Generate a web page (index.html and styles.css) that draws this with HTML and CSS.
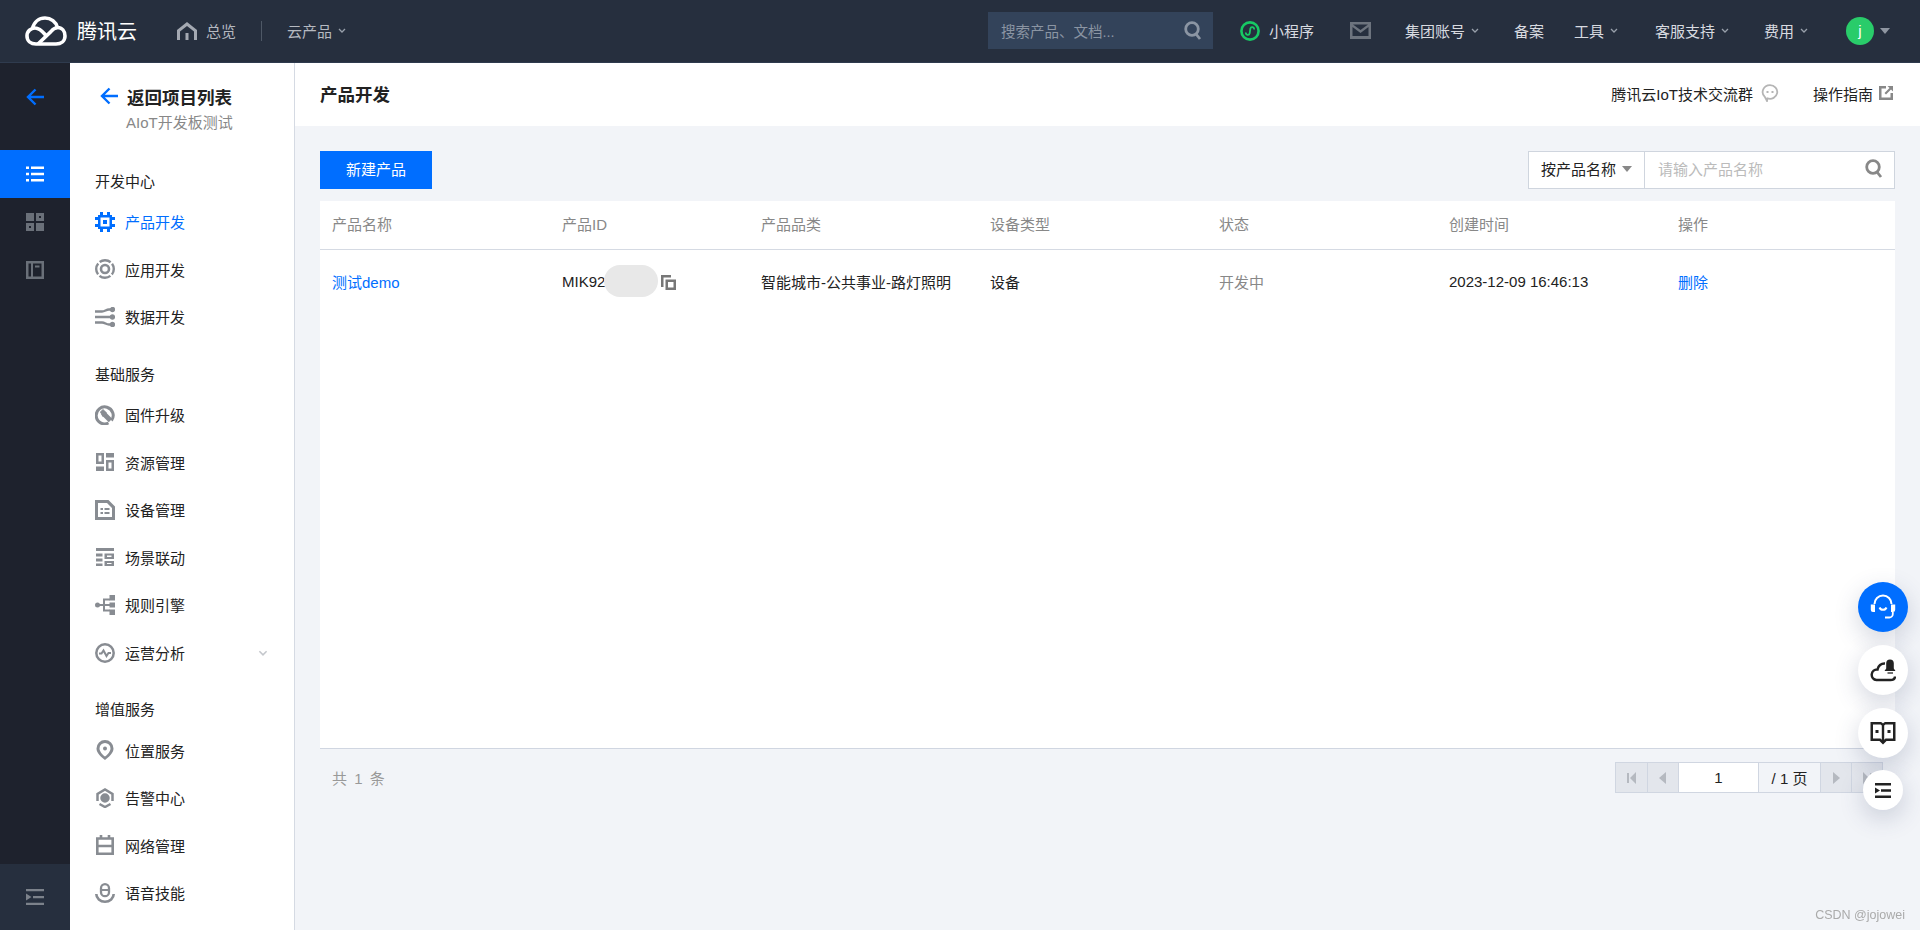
FILE: index.html
```html
<!DOCTYPE html>
<html lang="zh-CN">
<head>
    <meta charset="UTF-8">
    <title>产品开发</title>
    <link rel="stylesheet" href="styles.css">
</head>
<body>
    <header class="topbar">
        <svg class="logo" viewBox="0 0 42 30"><path d="M7.500 12.500C9 6 14 2 20 2C26 2 31 6 32.500 11.500C37 11.500 40 15 40 20C40 25 36 28 31 28L11 28C6 28 2 25 2 20C2 15 6 12 10 12C15 12 18 16 21 19.500"/><path d="M13 28L26 15.500C28 13 30 11.800 32.500 11.500"/></svg>
        <span class="brand">腾讯云</span>
        <svg class="home-icon" viewBox="0 0 20 18"><path d="M10 0L20 8V18H17V9.500L10 4L3 9.500V18H0V8Z"/><rect x="8.500" y="11" width="3" height="7"/></svg>
        <span class="top-left-link">总览</span>
        <span class="top-divider"></span>
        <span class="top-left-link products">云产品<svg class="chev" viewBox="0 0 8 5"><path d="M1 1L4 4L7 1"/></svg></span>

        <div class="top-search">
            <span>搜索产品、文档...</span>
            <svg class="search-icon" viewBox="0 0 18 20"><circle cx="8" cy="8" r="6.300"/><path d="M12 13L16 18"/></svg>
        </div>
        <svg class="mini-icon" viewBox="0 0 20 20"><circle cx="10" cy="10" r="8.600"/><path class="mini-s" d="M6 11.500C5.500 14 9 14.800 9.700 12.300L10.300 7.700C11 5.200 14.500 6 14 8.500"/></svg>
        <span class="top-link mini-text">小程序</span>
        <svg class="mail-icon" viewBox="0 0 21 17"><path d="M0 0H21V17H0ZM3 2.500L10.500 8L18 2.500ZM2.500 5V14H18.500V5L10.500 11Z"/></svg>
        <span class="top-link group">集团账号<svg class="chev" viewBox="0 0 8 5"><path d="M1 1L4 4L7 1"/></svg></span>
        <span class="top-link">备案</span>
        <span class="top-link tools">工具<svg class="chev" viewBox="0 0 8 5"><path d="M1 1L4 4L7 1"/></svg></span>
        <span class="top-link support">客服支持<svg class="chev" viewBox="0 0 8 5"><path d="M1 1L4 4L7 1"/></svg></span>
        <span class="top-link">费用<svg class="chev" viewBox="0 0 8 5"><path d="M1 1L4 4L7 1"/></svg></span>
        <span class="avatar">j</span>
        <span class="avatar-caret"></span>
    </header>

    <div class="main">
        <nav class="rail">
            <div class="rail-back">
                <svg class="arrow" viewBox="0 0 18 18"><path d="M18 9H2M9.500 1.500L2 9L9.500 16.500"/></svg>
            </div>
            <div class="rail-item active">
                <svg viewBox="0 0 18 16"><path d="M0 0.500h3v2.500H0zM5 0.500h13v2.500H5zM0 6.700h3v2.500H0zM5 6.700h13v2.500H5zM0 13h3v2.500H0zM5 13h13v2.500H5z"/></svg>
            </div>
            <div class="rail-item">
                <svg viewBox="0 0 18 18"><path d="M0 0h8v8H0zM10 0h8v8h-8zM13 3v2h2V3zM0 10h8v8H0zM3 13v2h2v-2zM10 10h8v8h-8z"/></svg>
            </div>
            <div class="rail-item">
                <svg viewBox="0 0 18 18"><path d="M0 0h18v18H0zM2.500 2.500v13h2.500v-13zM7 2.500v13h8.500v-13zM9 4.500h4.500v2H9z"/></svg>
            </div>
            <div class="rail-bottom">
                <svg viewBox="0 0 18 16"><path d="M0 0h18v2.300H0zM7 7h11v2.300H7zM0 13.700h18v2.300H0zM0 4.500L5.500 8L0 11.500z"/></svg>
            </div>
        </nav>

        <aside class="side">
            <div class="side-head">
                <div class="side-title">
                    <svg class="arrow" viewBox="0 0 18 18"><path d="M18 9H2M9.500 1.500L2 9L9.500 16.500"/></svg>
                    <span>返回项目列表</span>
                </div>
                <div class="side-sub">AIoT开发板测试</div>
            </div>

            <div class="side-label">开发中心</div>
            <div class="side-row current">
                <svg viewBox="0 0 20 20"><path d="M3 3h14v14H3zM5.500 5.500v9h9v-9zM8 8h4v4H8zM5 0h3v3H5zM12 0h3v3h-3zM5 17h3v3H5zM12 17h3v3h-3zM0 5h3v3H0zM0 12h3v3H0zM17 5h3v3h-3zM17 12h3v3h-3z"/></svg>
                <span>产品开发</span>
            </div>
            <div class="side-row">
                <svg class="ln" viewBox="0 0 20 20"><circle cx="10" cy="10" r="4" stroke-width="2.600"/><circle cx="10" cy="10" r="8.800" stroke-width="2.400" stroke-dasharray="11.800 2" stroke-dashoffset="5.900"/></svg>
                <span>应用开发</span>
            </div>
            <div class="side-row">
                <svg class="ln" viewBox="0 0 20 20" stroke-width="2.300"><path d="M0 4.500H7C10 4.500 11 2.500 14 2.500H18M0 10H18M0 15.500H7C10 15.500 11 17.500 14 17.500H18"/><circle class="dot" cx="17.500" cy="2.500" r="1.500"/><circle class="dot" cx="17.500" cy="10" r="1.500"/><circle class="dot" cx="17.500" cy="17.500" r="1.500"/></svg>
                <span>数据开发</span>
            </div>

            <div class="side-label next">基础服务</div>
            <div class="side-row">
                <svg class="ln" viewBox="0 0 20 20"><path d="M16.500 15.500A8.500 8.500 0 1 0 13.500 18" stroke-width="3"/><path d="M8 8L15.500 15.500" stroke-width="5"/><path d="M5.500 7L8 4.500L11.500 8L8 11.500Z" class="dot"/></svg>
                <span>固件升级</span>
            </div>
            <div class="side-row">
                <svg viewBox="0 0 20 20"><path d="M1 1h8v11H1zM3.500 3.500v6h3v-6zM11 1h8v4.500h-8zM11 8h8v11h-8zM13.500 10.500v6h3v-6zM1 14.500h8V19H1z"/></svg>
                <span>资源管理</span>
            </div>
            <div class="side-row">
                <svg viewBox="0 0 20 20"><path d="M0 0h13.500l6.500 6.500V20H0zM3 3v14h14V8l-5-5zM5.500 8h2.500v2H5.500zM9.500 8h5v2h-5zM5.500 12h2.500v2H5.500zM9.500 12h5v2h-5z"/></svg>
                <span>设备管理</span>
            </div>
            <div class="side-row">
                <svg viewBox="0 0 20 20"><path d="M1 1h18v3H1zM1 6.500h6.500v3H1zM9.500 6.500H19v5.500H9.500zM12 8.500v1.500h4.500V8.500zM1 11.500h6.500v3H1zM9.500 14H19v5H9.500zM12 16v1h4.500v-1zM1 16.500h6.500V19H1z"/></svg>
                <span>场景联动</span>
            </div>
            <div class="side-row">
                <svg viewBox="0 0 20 20"><circle cx="2.500" cy="10" r="2.500"/><path d="M4 9h11v2H4zM8 3.500h7v2h-5v9h5v2H8z"/><path d="M14.500 0H20v5.500h-5.500zM14.500 7.500H20v5h-5.500zM14.500 14.500H20V20h-5.500z"/></svg>
                <span>规则引擎</span>
            </div>
            <div class="side-row">
                <svg class="ln" viewBox="0 0 20 20"><circle cx="10" cy="10" r="8.700" stroke-width="2.500"/><path d="M4 10.500H6.500L8.500 7.500L11.500 13L13.500 10H16" stroke-width="2"/></svg>
                <span>运营分析</span>
                <svg class="chev side-chev" viewBox="0 0 8 5"><path d="M1 1L4 4L7 1"/></svg>
            </div>

            <div class="side-label next">增值服务</div>
            <div class="side-row">
                <svg viewBox="0 0 20 20"><path d="M10 0a8.500 8.500 0 0 1 8.500 8.500C18.500 13 14 17 10 20C6 17 1.500 13 1.500 8.500A8.500 8.500 0 0 1 10 0zM10 3a5.500 5.500 0 0 0-5.500 5.500C4.500 11 7 14.500 10 16.500C13 14.500 15.500 11 15.500 8.500A5.500 5.500 0 0 0 10 3z"/><circle cx="10" cy="8.500" r="2"/></svg>
                <span>位置服务</span>
            </div>
            <div class="side-row">
                <svg class="ln" viewBox="0 0 20 20" stroke-width="2.500"><path d="M2.500 13V6L10 1.500L17.500 6V13M4.500 16L10 19L15.500 16"/><circle class="dot" cx="10" cy="10" r="3.500"/></svg>
                <span>告警中心</span>
            </div>
            <div class="side-row">
                <svg class="ln" viewBox="0 0 20 20" stroke-width="2.600"><path d="M2.300 3.500H17.700V18.700H2.300ZM2.300 11H17.700M6 0V3.500M14 0V3.500"/></svg>
                <span>网络管理</span>
            </div>
            <div class="side-row">
                <svg class="ln" viewBox="0 0 20 20"><rect x="6" y="1.200" width="8" height="12" rx="4" stroke-width="2.300"/><path d="M6 7H14" stroke-width="2"/><path d="M1.300 11A8.700 7.700 0 0 0 18.700 11" stroke-width="2.600"/></svg>
                <span>语音技能</span>
            </div>
        </aside>

        <section class="content">
            <div class="page-head">
                <h1>产品开发</h1>
                <span class="head-link">腾讯云IoT技术交流群</span>
                <svg class="chat-icon" viewBox="0 0 18 18"><path d="M9 1.200a7.300 6.800 0 1 1-2.500 13.200L6 17L3.800 12.800A7.300 6.800 0 0 1 9 1.200z"/><path class="dots" d="M5.500 7h2v2h-2zM10.500 7h2v2h-2z"/></svg>
                <span class="head-link guide">操作指南</span>
                <svg class="ext-icon" viewBox="0 0 14 14"><path d="M0 0h7v2.500H2.500v9h9V7H14v7H0zM8.500 0H14v5.500l-2-2L7 8.500 5.500 7l5-5z"/></svg>
            </div>

            <div class="page-body">
                <div class="toolbar">
                    <button class="btn-primary">新建产品</button>
                    <div class="filter">
                        <div class="filter-select">按产品名称<span class="caret"></span></div>
                        <div class="filter-input">
                            <span>请输入产品名称</span>
                            <svg class="search-icon" viewBox="0 0 18 20"><circle cx="8" cy="8" r="6.300"/><path d="M12 13L16 18"/></svg>
                        </div>
                    </div>
                </div>

                <div class="panel">
                    <table class="grid">
                        <colgroup>
                            <col class="col-a"><col class="col-b"><col class="col-c"><col class="col-c"><col class="col-a"><col class="col-c"><col class="col-c">
                        </colgroup>
                        <thead>
                            <tr><th>产品名称</th><th>产品ID</th><th>产品品类</th><th>设备类型</th><th>状态</th><th>创建时间</th><th>操作</th></tr>
                        </thead>
                        <tbody>
                            <tr>
                                <td><a class="link">测试demo</a></td>
                                <td>
                                    <div class="id-cell">
                                        <span>MIK92</span>
                                        <span class="blot"></span>
                                        <svg class="copy-icon" viewBox="0 0 15 15"><path d="M0 0h10v2.500H2.500V12H0zM4.500 4.500H15V15H4.500zM7 7v5.500h5.500V7z"/></svg>
                                    </div>
                                </td>
                                <td>智能城市-公共事业-路灯照明</td>
                                <td>设备</td>
                                <td class="muted">开发中</td>
                                <td>2023-12-09 16:46:13</td>
                                <td><a class="link">删除</a></td>
                            </tr>
                        </tbody>
                    </table>
                </div>

                <div class="table-foot">
                    <span class="total">共 1 条</span>
                    <div class="pager">
                        <span class="pager-btn"><svg viewBox="0 0 10 12"><path d="M0 1h2v10H0zM9 0v12L3 6z"/></svg></span>
                        <span class="pager-btn"><svg viewBox="0 0 10 12"><path d="M8 0v12L1 6z"/></svg></span>
                        <span class="pager-input">1</span>
                        <span class="pager-count">/ 1 页</span>
                        <span class="pager-btn"><svg viewBox="0 0 10 12"><path d="M2 0v12l7-6z"/></svg></span>
                        <span class="pager-btn"><svg viewBox="0 0 10 12"><path d="M1 0v12l6-6zM8 1h2v10H8z"/></svg></span>
                    </div>
                </div>
            </div>
        </section>
    </div>

    <div class="float-btns">
        <span class="float-btn blue">
            <svg class="ln" viewBox="0 0 26 26"><path d="M4.500 10A8.500 8.500 0 0 1 21.500 10" stroke-width="2"/><path class="dot" d="M0.800 10.500H5V18H3a2.200 2.200 0 0 1-2.200-2.200zM21 10.500H25.200V15.800A2.200 2.200 0 0 1 23 18H21z" stroke="none"/><path d="M22.800 18V20A3.500 3.500 0 0 1 19.300 23.500H15" stroke-width="1.800"/><path d="M9.500 13.500A3.800 3.800 0 0 0 16.500 13.500" stroke-width="2"/></svg>
        </span>
        <span class="float-btn">
            <svg class="ln" viewBox="0 0 26 26"><path d="M15 6.500A7 7 0 0 0 7.500 12.500A5.200 5.200 0 0 0 6.500 23H20.500C23 23 24.800 21.800 25 19.500" stroke-width="2.500"/><path class="dot" d="M20 2.500a3.800 3.800 0 0 1 3.800 3.800V11.500L25.500 14H14.500L16.200 11.500V6.300A3.800 3.800 0 0 1 20 2.500z" stroke="none"/><path d="M17.500 16H23" stroke-width="1.300"/></svg>
        </span>
        <span class="float-btn">
            <svg viewBox="0 0 26 26"><path d="M0.500 2h9.500c1.500 0 2.500.6 3 1.500C13.500 2.600 14.500 2 16 2h9.500v19h-9L13 24.500 9.500 21h-9zM3 4.500v14h7.500l1.300 1.300V6c0-1-.8-1.500-2-1.500zM14.200 6v13.800l1.300-1.300H23v-14h-6.800c-1.200 0-2 .5-2 1.500z"/><path d="M5.500 10h3v3h-3zM17.500 10h3v3h-3z"/></svg>
        </span>
        <span class="float-btn small">
            <svg viewBox="0 0 16 15"><path d="M0 0h16v2.400H0zM6 6.300h10v2.400H6zM0 12.600h16V15H0zM0 4.500L5 7.500L0 10.500z"/></svg>
        </span>
    </div>

    <div class="watermark">CSDN @jojowei</div>
</body>
</html>
```

FILE: styles.css
```css
* { box-sizing: border-box; }
html, body { height: 100%; }
body { margin: 0; height: 930px; overflow: hidden; display: flex; flex-direction: column; font-family: "Liberation Sans", "Noto Sans CJK SC", sans-serif; font-size: 15px; color: #222; background: #f2f4f8; }
svg { display: block; flex: none; fill: currentColor; }
svg.ln { fill: none; stroke: currentColor; }
svg.ln .dot { fill: currentColor; }

/* top bar */
.topbar { flex: none; height: 63px; padding: 0 0 1px 25px; display: flex; align-items: center; background: #262f3e; border-bottom: 1px solid #2f3b4e; color: #d8dbe0; }
.logo { width: 42px; height: 30px; fill: none; stroke: #fff; stroke-width: 3.6; }
.brand { margin-left: 10px; font-size: 20px; color: #fff; }
.home-icon { width: 20px; height: 18px; margin-left: 40px; color: #a4a9b2; }
.top-left-link { margin-left: 9px; display: flex; align-items: center; color: #b5b9c0; }
.top-divider { width: 1px; height: 20px; margin-left: 25px; background: #4e5866; }
.products { margin-left: 25px; }
.chev { width: 8px; height: 5px; margin-left: 6px; fill: none; stroke: #98a0ab; stroke-width: 1.300; }
.top-search { width: 225px; height: 37px; margin-left: auto; padding: 0 11px 0 13px; display: flex; align-items: center; justify-content: space-between; background: #33435a; color: #8b95a3; font-size: 14.500px; }
.search-icon { width: 18px; height: 20px; fill: none; stroke: #8b95a3; stroke-width: 2.800; }
.mini-icon { width: 20px; height: 20px; margin-left: 27px; fill: none; stroke: #17c964; stroke-width: 2.600; }
.mini-s { stroke-width: 1.800; }
.mail-icon { width: 21px; height: 17px; margin-left: 36px; color: #6d747e; }
.top-link { display: flex; align-items: center; margin-left: 35px; white-space: nowrap; }
.top-link.mini-text { margin-left: 9px; }
.group { margin-left: 34px; }
.tools { margin-left: 30px; }
.support { margin-left: 37px; }
.avatar { width: 28px; height: 28px; margin-left: 38px; border-radius: 50%; background: #29cc6a; color: #fff; text-align: center; line-height: 27px; font-size: 15px; }
.avatar-caret { width: 0; height: 0; margin: 0 30px 0 6px; border-left: 5px solid transparent; border-right: 5px solid transparent; border-top: 6px solid #8f96a1; }

.main { flex: 1; display: flex; min-height: 0; }

/* dark icon rail */
.rail { flex: none; width: 70px; display: flex; flex-direction: column; background: #1e222d; color: #6a7079; }
.rail svg { width: 18px; height: 18px; }
.rail-back { height: 87px; padding-bottom: 20px; display: flex; align-items: center; justify-content: center; }
.arrow { width: 18px; height: 18px; fill: none; stroke: #006eff; stroke-width: 2.400; }
.rail-item { height: 48px; display: flex; align-items: center; justify-content: center; }
.rail-item.active { background: #006eff; color: #fff; }
.rail-bottom { margin-top: auto; height: 66px; display: flex; align-items: center; justify-content: center; background: #262f3e; color: #7c828b; }

/* project sidebar */
.side { flex: none; width: 225px; padding-left: 25px; background: #fff; border-right: 1px solid #d5dae3; overflow: hidden; }
.side-head { height: 107px; padding-top: 20px; }
.side-title { height: 26px; margin-left: 5px; display: flex; align-items: center; gap: 9px; font-size: 17.500px; font-weight: bold; }
.side-sub { margin: 3px 0 0 31px; line-height: 22px; color: #888; }
.side-label { height: 24px; margin-bottom: 4px; line-height: 24px; }
.side-label.next { margin-top: 22px; }
.side-row { height: 47.600px; display: flex; align-items: center; gap: 10px; }
.side-row > svg:first-child { width: 20px; height: 20px; color: #888c92; }
.side-row.current, .side-row.current > svg:first-child { color: #006eff; }
.side-chev { width: 10px; height: 6px; margin-left: 63px; stroke: #c4c7cc; }

/* page */
.content { flex: 1; min-width: 0; display: flex; flex-direction: column; }
.page-head { flex: none; height: 63px; padding: 0 27px 3px 25px; display: flex; align-items: center; background: #fff; }
.page-head h1 { margin: 0 auto 0 0; font-size: 17.500px; font-weight: bold; }
.chat-icon { width: 18px; height: 18px; margin-left: 8px; fill: #fff; stroke: #b5b5b5; stroke-width: 1.800; }
.chat-icon .dots { fill: #b5b5b5; stroke: none; }
.guide { margin-left: 34px; }
.ext-icon { width: 14px; height: 14px; margin-left: 6px; color: #888; }

.page-body { flex: 1; padding: 25px 25px 0; }
.toolbar { height: 38px; display: flex; justify-content: space-between; }
.btn-primary { width: 112px; border: 0; padding: 0 0 3px; background: #006eff; color: #fff; font: inherit; }
.filter { display: flex; background: #fff; }
.filter-select { width: 117px; padding: 0 0 3px 12px; display: flex; align-items: center; border: 1px solid #cfd5de; }
.caret { margin-left: 6px; border-left: 5px solid transparent; border-right: 5px solid transparent; border-top: 6px solid #888; }
.filter-input { width: 250px; padding: 0 11px 3px 13px; display: flex; align-items: center; justify-content: space-between; border: 1px solid #cfd5de; border-left: 0; color: #bbb; }
.filter-input .search-icon { stroke: #888; }

.panel { height: 547px; margin-top: 12px; background: #fff; }
.grid { width: 100%; table-layout: fixed; border-collapse: collapse; text-align: left; }
.col-a { width: 230px; }
.col-b { width: 199px; }
.col-c { width: 229px; }
.grid th { height: 48px; padding: 0 12px 2px; font-weight: normal; color: #888; border-bottom: 1px solid #d5dae3; }
.grid td { height: 66px; padding: 0 12px 2px; }
.link { color: #006eff; }
.muted { color: #888; }
.id-cell { display: flex; align-items: center; }
.blot { width: 54px; height: 32px; margin-left: -1px; border-radius: 16px; background: #e8e8e8; }
.copy-icon { width: 15px; height: 15px; margin: 3px 0 0 3px; color: #777; }

.table-foot { height: 50px; padding: 13px 12px 0; display: flex; justify-content: space-between; border-top: 1px solid #d0d6e1; }
.total { line-height: 34px; color: #999; word-spacing: 3px; }
.pager { height: 31px; display: flex; border: 1px solid #d0d6e1; }
.pager > span { display: flex; align-items: center; justify-content: center; border-left: 1px solid #d0d6e1; }
.pager > span:first-child { border-left: 0; }
.pager-btn { width: 31px; background: #e3e6ec; color: #b5b9c0; }
.pager-btn svg { width: 10px; height: 12px; }
.pager-input { width: 80px; background: #fff; }
.pager-count { width: 62px; }

/* floating help buttons */
.float-btns { position: fixed; left: 1858px; top: 582px; width: 50px; display: flex; flex-direction: column; align-items: center; gap: 13px; }
.float-btn { width: 50px; height: 50px; border-radius: 50%; display: flex; align-items: center; justify-content: center; background: #fff; color: #222; box-shadow: 0 8px 24px rgba(55, 70, 110, 0.22); }
.float-btn.blue { background: #006eff; color: #fff; }
.float-btn svg { width: 26px; height: 26px; }
.float-btn.small { width: 40px; height: 40px; margin-top: -1px; }
.float-btn.small svg { width: 16px; height: 15px; }

.watermark { position: fixed; right: 15px; bottom: 8px; font-size: 12.500px; color: #aaa; }
```
